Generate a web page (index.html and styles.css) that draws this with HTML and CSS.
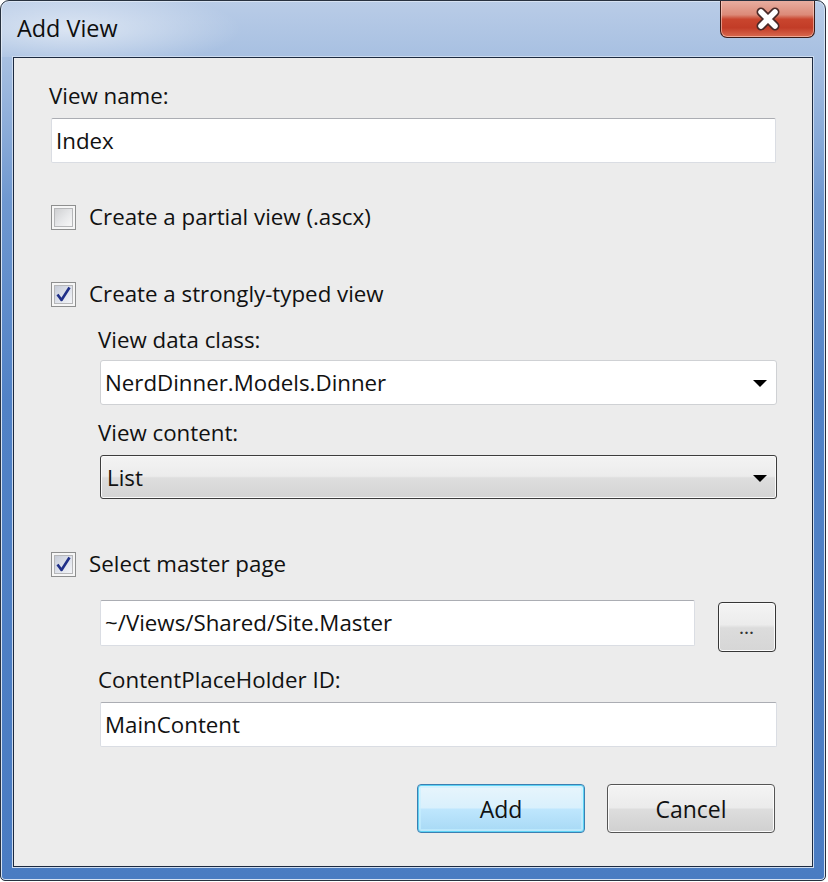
FILE: index.html
```html
<!DOCTYPE html>
<html>
<head>
<meta charset="utf-8">
<link rel="stylesheet" href="styles.css">
</head>
<body>
<div class="window">
  <div class="titlebar">
    <div class="title">Add View</div>
    <div class="close">
      <svg width="40" height="24" viewBox="0 0 40 24">
        <path d="M13 5 L27 19 M27 5 L13 19" stroke="#4a2a28" stroke-width="9" stroke-linecap="round"/>
        <path d="M13 5 L27 19 M27 5 L13 19" stroke="#ffffff" stroke-width="5.5" stroke-linecap="round"/>
      </svg>
    </div>
  </div>
  <div class="client">
    <div class="label top">View name:</div>
    <div class="textbox tb-name">Index</div>

    <div class="check-row r1">
      <span class="checkbox"></span>
      <span class="check-label">Create a partial view (.ascx)</span>
    </div>

    <div class="check-row r2">
      <span class="checkbox checked">
        <svg width="19" height="19" viewBox="0 0 19 19"><path d="M3.5 9.5 L7.5 15 L15.5 2.5" fill="none" stroke="#1f2f88" stroke-width="2.6" stroke-linejoin="round"/></svg>
      </span>
      <span class="check-label">Create a strongly-typed view</span>
    </div>

    <div class="indent">
      <div class="label l-data">View data class:</div>
      <div class="combo editable">
        <span>NerdDinner.Models.Dinner</span>
        <span class="arrow"></span>
      </div>
      <div class="label l-content">View content:</div>
      <div class="combo dropdown">
        <span>List</span>
        <span class="arrow"></span>
      </div>
    </div>

    <div class="check-row r3">
      <span class="checkbox checked">
        <svg width="19" height="19" viewBox="0 0 19 19"><path d="M3.5 9.5 L7.5 15 L15.5 2.5" fill="none" stroke="#1f2f88" stroke-width="2.6" stroke-linejoin="round"/></svg>
      </span>
      <span class="check-label">Select master page</span>
    </div>

    <div class="indent">
      <div class="master-row">
        <div class="textbox tb-master">~/Views/Shared/Site.Master</div>
        <div class="browse"><span class="dots">...</span></div>
      </div>
      <div class="label l-holder">ContentPlaceHolder ID:</div>
      <div class="textbox tb-holder">MainContent</div>
    </div>

    <div class="buttons">
      <div class="btn btn-add">Add</div>
      <div class="btn btn-cancel">Cancel</div>
    </div>
  </div>
</div>
</body>
</html>
```

FILE: styles.css
```css
html, body {
  margin: 0;
  padding: 0;
  background: #ffffff;
}

body {
  font-family: "Open Sans", "Noto Sans", "DejaVu Sans", sans-serif;
  color: #111111;
}

.window {
  width: 824px;
  height: 879px;
  border: 1px solid #27313f;
  border-radius: 9px 9px 5px 5px;
  background: linear-gradient(180deg, #b9cce7 0px, #a6bfe1 60px, #6f98d0 200px, #5182c6 400px, #4a7cc2 879px);
  box-shadow: inset 0 0 0 1px #d6e2f2;
  display: flex;
  flex-direction: column;
  overflow: hidden;
}

.titlebar {
  height: 56px;
  display: flex;
  justify-content: space-between;
  align-items: flex-start;
  padding-left: 16px;
  padding-right: 10px;
  background: radial-gradient(ellipse 170px 40px at 70px 28px, rgba(255,255,255,0.55), rgba(255,255,255,0) 100%);
}

.title {
  font-size: 23.4px;
  line-height: 26px;
  margin-top: 14px;
  color: #0e0e0e;
}

.close {
  width: 93px;
  height: 37px;
  margin-top: -1px;
  border: 1px solid #3b1c18;
  border-top: none;
  border-radius: 0 0 7px 7px;
  background: linear-gradient(180deg, #e9b0a3 0%, #dc8a78 40%, #c9452e 52%, #c23c27 75%, #d96a4f 100%);
  box-shadow: inset 0 0 0 1px rgba(255,220,210,0.55);
  display: flex;
  align-items: center;
  justify-content: center;
}

.client {
  margin-left: 12px;
  height: 808px;
  border: 1px solid #1c2a40;
  background: #ececec;
  box-shadow: 0 0 0 1px #cddcf0;
  padding: 0 37px 0 37px;
  box-sizing: content-box;
  display: flex;
  flex-direction: column;
  width: 724px;
}

.label {
  font-size: 22.3px;
  line-height: 28px;
  height: 28px;
  margin-left: -2px;
  white-space: nowrap;
}

.label.top { margin-top: 24px; }

.textbox {
  box-sizing: border-box;
  height: 45px;
  background: #ffffff;
  border: 1px solid #dadde3;
  border-top-color: #abadb3;
  border-radius: 2px;
  font-size: 22.3px;
  line-height: 43px;
  padding-left: 4px;
  color: #111;
  white-space: nowrap;
}

.tb-name { margin-top: 8px; width: 725px; }

.check-row {
  display: flex;
  align-items: center;
  height: 28px;
  gap: 13px;
}

.r1 { margin-top: 40px; }
.r2 { margin-top: 49px; }
.r3 { margin-top: 51px; }

.checkbox {
  box-sizing: border-box;
  width: 25px;
  height: 25px;
  border: 1px solid #8e8f8f;
  background: #f4f4f4;
  box-shadow: inset 0 0 0 2px #f6f6f6, inset 0 0 0 3px #b6b7b9;
  display: flex;
  align-items: center;
  justify-content: center;
  position: relative;
}

.checkbox::before {
  content: "";
  position: absolute;
  left: 3px; top: 3px; right: 3px; bottom: 3px;
  background: linear-gradient(135deg, #cfd0d2 0%, #e7e8ea 55%, #f7f7f7 100%);
}

.checkbox.checked::before {
  background: linear-gradient(135deg, #c7ccd8 0%, #dfe3ec 55%, #f4f5f8 100%);
}

.checkbox svg { position: relative; }

.check-label {
  font-size: 22.3px;
  line-height: 28px;
  white-space: nowrap;
}

.indent {
  display: flex;
  flex-direction: column;
  padding-left: 49px;
  margin-right: -2px;
}

.l-data { margin-top: 18px; }
.l-content { margin-top: 14px; }
.l-holder { margin-top: 14px; }

.combo {
  box-sizing: border-box;
  display: flex;
  align-items: center;
  justify-content: space-between;
  font-size: 22.3px;
  white-space: nowrap;
}

.combo.editable {
  margin-top: 6px;
  height: 45px;
  background: #ffffff;
  border: 1px solid #cfd1d4;
  border-radius: 3px;
  padding-left: 4px;
  padding-right: 9px;
}

.combo.dropdown {
  margin-top: 8px;
  height: 44px;
  border: 1px solid #3d3d3d;
  border-radius: 3px;
  background: linear-gradient(180deg, #f3f3f3 0%, #ececec 48%, #dedede 52%, #d4d4d4 100%);
  box-shadow: inset 0 0 0 1px #fafafa;
  padding-left: 6px;
  padding-right: 9px;
}

.arrow {
  width: 0;
  height: 0;
  border-left: 7px solid transparent;
  border-right: 7px solid transparent;
  border-top: 7px solid #000000;
  margin-top: 2px;
}

.master-row {
  margin-top: 22px;
  display: flex;
  align-items: flex-start;
  gap: 23px;
  height: 52px;
}

.tb-master {
  width: 595px;
  height: 46px;
  line-height: 44px;
}

.browse {
  box-sizing: border-box;
  margin-top: 2px;
  width: 58px;
  height: 50px;
  border: 1px solid #363636;
  border-radius: 4px;
  background: linear-gradient(180deg, #f4f4f4 0%, #ececec 45%, #dcdcdc 52%, #d6d6d6 100%);
  box-shadow: inset 0 0 0 1px #fbfbfb;
  display: flex;
  align-items: center;
  justify-content: center;
}

.dots {
  font-size: 14px;
  font-weight: bold;
  line-height: 14px;
  color: #333;
  letter-spacing: 1px;
  margin-top: 4px;
}

.tb-holder {
  margin-top: 8px;
  width: 677px;
  height: 45px;
}

.buttons {
  margin-top: 37px;
  display: flex;
  justify-content: flex-end;
  gap: 22px;
}

.btn {
  box-sizing: border-box;
  width: 168px;
  height: 49px;
  border-radius: 4px;
  display: flex;
  align-items: center;
  justify-content: center;
  font-size: 23px;
  color: #111;
}

.btn-add {
  border: 1px solid #3c7fb1;
  background: linear-gradient(180deg, #e8f5fc 0%, #d9f0fc 48%, #bee6fd 52%, #a7d9f5 100%);
  box-shadow: inset 0 0 0 1px #5ed3f5, inset 0 0 0 3px rgba(200,240,255,0.6);
}

.btn-cancel {
  border: 1px solid #555555;
  background: linear-gradient(180deg, #f4f4f4 0%, #ebebeb 48%, #dddddd 52%, #d0d0d0 100%);
  box-shadow: inset 0 0 0 1px #fcfcfc;
}
```
